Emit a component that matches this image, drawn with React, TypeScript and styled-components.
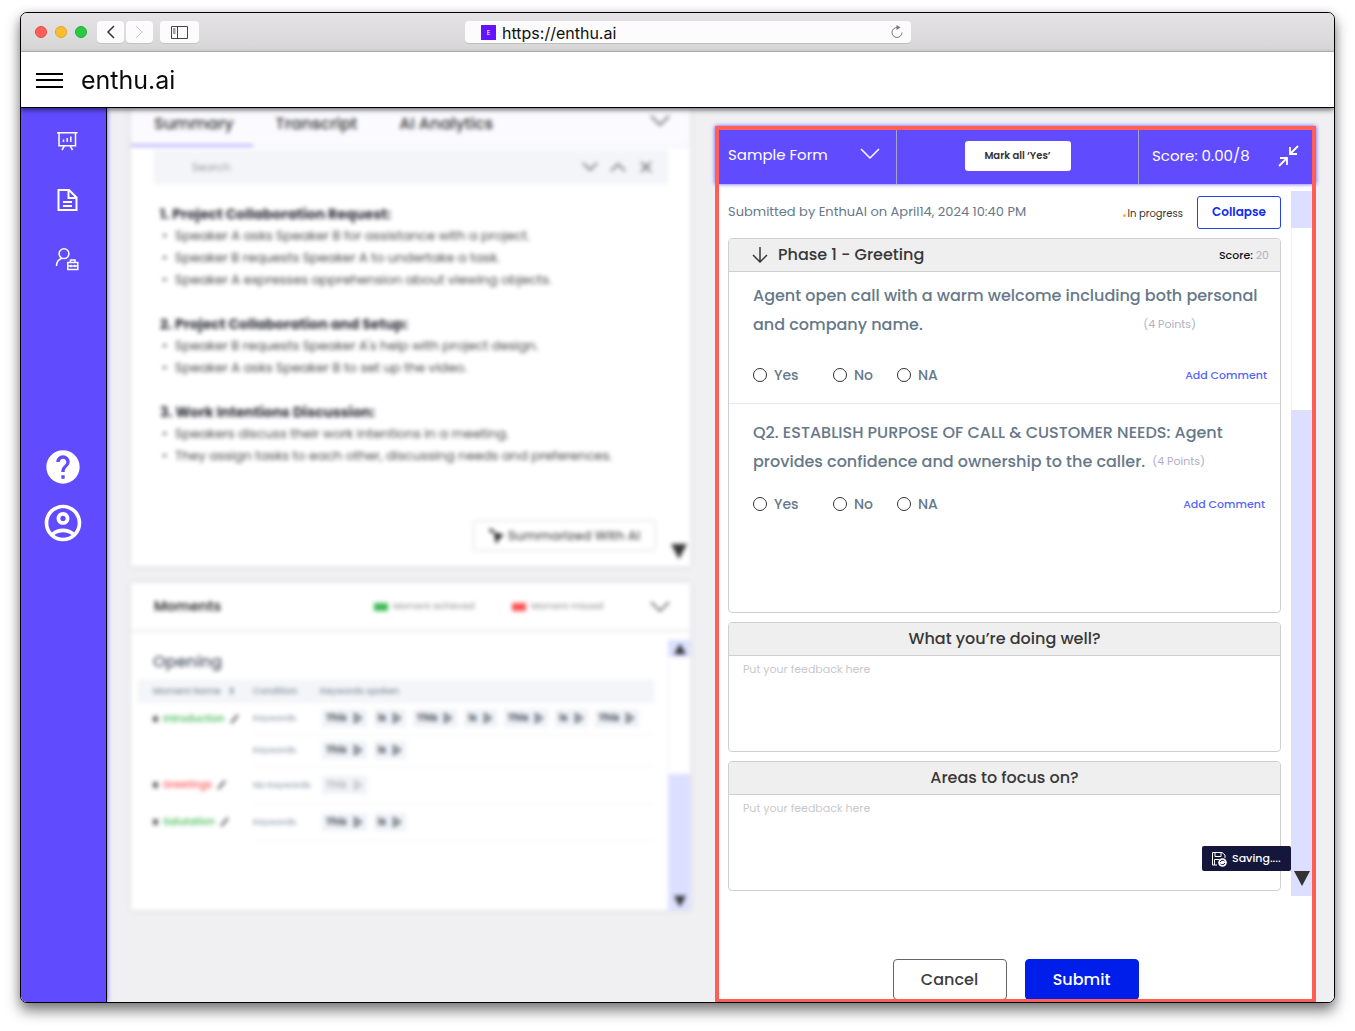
import React from "react";
import styled, { createGlobalStyle, css } from "styled-components";
import { MdHelp, MdOutlineAccountCircle } from "react-icons/md";

const violet = "#614bff";
const slate = "#667889";
const lavender = "#dcdfff";

const GlobalStyle = createGlobalStyle`
  *, *::before, *::after { box-sizing: border-box; }
  body {
    margin: 0;
    background: #fff;
    font-family: Poppins, Inter, "Liberation Sans", sans-serif;
    color: #333;
  }
  button, input, textarea { font: inherit; color: inherit; }
  button { padding: 0; border: 0; background: none; cursor: pointer; white-space: nowrap; }
  ul, h1, h2, h3, p { margin: 0; padding: 0; list-style: none; }
  svg { display: block; flex: none; }
`;

const Page = styled.div`
  padding: 12px 20px 28px;
`;

const BrowserWindow = styled.div`
  border: 1px solid #000;
  border-radius: 7px;
  overflow: hidden;
  background: #fff;
  box-shadow: 0 8px 14px rgba(0, 0, 0, 0.5), 0 0 8px rgba(0, 0, 0, 0.12);
`;

/* Browser chrome */

const Chrome = styled.div`
  display: grid;
  grid-template-columns: 444fr 446fr 423fr;
  align-items: center;
  height: 39px;
  border-bottom: 1px solid #bdbabd;
  background: linear-gradient(#e5e3e5, #d7d6d7);
`;

const ChromeLeft = styled.div`
  display: flex;
  align-items: center;
  padding-left: 14px;
`;

const Lights = styled.div`
  display: flex;
  gap: 8px;
  margin-right: 10px;
`;

const Light = styled.span<{ $fill: string; $edge: string }>`
  width: 12px;
  height: 12px;
  border-radius: 50%;
  border: 1px solid ${(p) => p.$edge};
  background: ${(p) => p.$fill};
`;

const ChromeButton = styled.button<{ $wide?: boolean }>`
  display: flex;
  align-items: center;
  justify-content: center;
  width: ${(p) => (p.$wide ? 39 : 27)}px;
  height: 22px;
  margin-right: ${(p) => (p.$wide ? 0 : 2)}px;
  margin-left: ${(p) => (p.$wide ? 5 : 0)}px;
  border-radius: 4px;
  background: #fcfcfc;
  box-shadow: 0 1px 0 rgba(0, 0, 0, 0.1);
  &:disabled { color: #c4c4c4; }
`;

const Address = styled.label`
  display: flex;
  align-items: center;
  gap: 6px;
  height: 22px;
  padding: 0 8px 0 16px;
  border-radius: 4px;
  background: #fcfcfc;
  box-shadow: 0 1px 0 rgba(0, 0, 0, 0.12);
`;

const Favicon = styled.span`
  width: 15px;
  height: 15px;
  background: #6213ff;
  color: #fff;
  font-size: 7px;
  line-height: 15px;
  text-align: center;
`;

const UrlInput = styled.input`
  flex: 1;
  min-width: 0;
  height: 22px;
  padding: 2px 0 0;
  border: 0;
  outline: 0;
  background: none;
  color: #111;
  font-family: Inter, sans-serif;
  font-size: 16px;
`;

/* App frame */

const TopBar = styled.header`
  position: relative;
  z-index: 3;
  display: flex;
  align-items: center;
  gap: 18px;
  height: 56px;
  padding: 1px 0 0 15px;
  border-bottom: 1px solid #000;
  background: #fff;
  color: #000;
  box-shadow: 0 2px 5px rgba(0, 0, 0, 0.55);
`;

const Brand = styled.span`
  font-family: Inter, sans-serif;
  font-size: 25px;
  line-height: 32px;
  color: #0b0b0b;
`;

const Shell = styled.div`
  display: flex;
  background: #f0f0f3;
`;

const Sidebar = styled.nav`
  position: relative;
  z-index: 2;
  flex: none;
  width: 86px;
  padding-top: 20px;
  border-right: 1px solid #000;
  background: ${violet};
  box-shadow: 0 0 5px ${violet};
`;

const NavGroup = styled.div<{ $secondary?: boolean }>`
  display: flex;
  flex-direction: column;
  gap: ${(p) => (p.$secondary ? 12 : 36)}px;
  padding-left: ${(p) => (p.$secondary ? 20 : 34)}px;
  margin-top: ${(p) => (p.$secondary ? 173 : 0)}px;
`;

const NavButton = styled.button<{ $size: number }>`
  display: flex;
  align-items: center;
  justify-content: center;
  width: ${(p) => p.$size}px;
  height: ${(p) => p.$size}px;
  color: #fff;
`;

const Main = styled.main`
  flex: 1;
  min-width: 0;
  display: grid;
  grid-template-columns: minmax(0, 559fr) minmax(0, 601fr);
  column-gap: 25px;
  padding: 0 18px 0 24px;
`;

/* Left column, out of focus behind the form */

const Backdrop = styled.section`
  filter: blur(2px);
`;

const Card = styled.div`
  background: #fff;
  box-shadow: 0 0 6px rgba(0, 0, 0, 0.1);
  margin-bottom: 17px;
`;

const Tabs = styled.div`
  display: flex;
  height: 39px;
  border-bottom: 1px solid #e9e9ee;
  background: #fbfbff;
`;

const Tab = styled.button<{ $active?: boolean }>`
  height: 39px;
  padding: 0 19px 6px 23px;
  border-bottom: 3px solid ${(p) => (p.$active ? "#bfb6ff" : "transparent")};
  font-size: 16px;
  font-weight: 500;
  color: #333;
`;

const TabToggle = styled.button`
  margin-left: auto;
  padding: 0 20px 12px 0;
  color: #444;
`;

const SummaryBody = styled.div`
  display: flex;
  flex-direction: column;
  height: 419px;
  padding: 3px 3px 7px 23px;
`;

const SearchBar = styled.label`
  display: flex;
  align-items: center;
  gap: 12px;
  height: 34px;
  margin-right: 19px;
  padding: 0 14px 0 36px;
  background: #f4f5f8;
  color: #555;
`;

const SearchInput = styled.input`
  flex: 1;
  min-width: 0;
  border: 0;
  background: none;
  font-size: 11px;
  &::placeholder { color: #999; }
`;

const SummaryBlock = styled.section`
  margin: 0 0 22px 6px;
  font-size: 13px;
  line-height: 22px;
  color: #444;
  ${SearchBar} + & { margin-top: 19px; }
  h3 { font-size: 14px; line-height: 22px; font-weight: 700; color: #2c2c38; }
  li { display: flex; gap: 8px; padding-left: 2px; }
  li::before { content: "•"; width: 5px; }
`;

const SummaryFoot = styled.div`
  display: flex;
  align-items: flex-end;
  justify-content: flex-end;
  gap: 15px;
  margin-top: auto;
`;

const AiButton = styled.button`
  display: flex;
  align-items: center;
  justify-content: center;
  gap: 4px;
  width: 183px;
  height: 31px;
  margin-bottom: 8px;
  border: 1px solid #dcdce0;
  border-radius: 3px;
  font-size: 13px;
  font-weight: 500;
  color: #555;
`;

const MomentsHead = styled.div`
  display: flex;
  align-items: center;
  height: 49px;
  padding: 0 20px 0 23px;
  border-bottom: 2px solid #ececef;
  color: #444;
  h2 { flex: 1; font-size: 14px; font-weight: 600; color: #333; }
`;

const Legend = styled.span<{ $color: string }>`
  display: flex;
  align-items: center;
  gap: 5px;
  width: 138px;
  font-size: 9px;
  color: #888;
  &::before { content: ""; width: 14px; height: 8px; background: ${(p) => p.$color}; }
`;

const MomentsBody = styled.div`
  display: flex;
  height: 278px;
  padding-left: 7px;
`;

const MomentsContent = styled.div`
  flex: 1;
  min-width: 0;
  padding-right: 14px;
  h3 {
    padding: 18px 0 6px 15px;
    font-size: 16px;
    line-height: 24px;
    font-weight: 500;
    color: #4d5663;
  }
`;

const Table = styled.table`
  width: 100%;
  border-collapse: collapse;
  table-layout: fixed;
  font-size: 9px;
  color: #7c8a9b;
  th { height: 23px; padding: 0; background: #f3f5f8; text-align: left; font-weight: 500; }
  th:first-child, td:first-child { width: 115px; padding-left: 15px; }
  th:nth-child(2) { width: 67px; }
  td { padding: 0; }
  td + td { border-bottom: 1px solid #f4f5f7; }
`;

const MomentRow = styled.tr<{ $height: number }>`
  height: ${(p) => p.$height}px;
`;

const MomentName = styled.span<{ $missed?: boolean }>`
  display: flex;
  align-items: center;
  gap: 5px;
  font-size: 10px;
  font-weight: 500;
  color: ${(p) => (p.$missed ? "#fb5252" : "#3fb950")};
  &::before { content: ""; width: 5px; height: 6px; background: #666; }
  svg { color: #555; }
`;

const Chips = styled.div`
  display: flex;
  gap: 7px;
  padding-left: 2px;
`;

const Chip = styled.span<{ $muted?: boolean }>`
  display: flex;
  gap: 6px;
  padding: 3px 4px;
  background: #eff2f7;
  font-size: 10px;
  line-height: 12px;
  font-weight: 600;
  color: ${(p) => (p.$muted ? "#b0b0b0" : "#333a45")};
`;

const MiniScroll = styled.div`
  display: flex;
  flex-direction: column;
  width: 22px;
  margin-top: 8px;
  color: #333;
`;

const ScrollPart = styled.div<{ $filled?: boolean; $size?: number; $inset?: number }>`
  display: flex;
  justify-content: center;
  align-items: ${(p) => (p.$inset ? "flex-end" : "center")};
  ${(p) => (p.$size ? `height: ${p.$size}px;` : "flex: 1;")}
  padding-bottom: ${(p) => p.$inset || 0}px;
  border-left: 1px solid ${(p) => (p.$filled ? lavender : "#eeefff")};
  background: ${(p) => (p.$filled ? lavender : "#fff")};
`;

/* Evaluation form */

const Panel = styled.section`
  position: relative;
  margin-top: 18px;
  background: #fff;
  &::after {
    content: "";
    position: absolute;
    inset: 0;
    border: 4px solid #ff5f57;
    border-bottom-width: 3px;
    pointer-events: none;
  }
`;

const PanelHead = styled.div`
  display: grid;
  grid-template-columns: minmax(0, 177fr) minmax(0, 242fr) minmax(0, 174fr);
  height: 58px;
  padding: 4px 4px 0;
  background: ${violet};
  box-shadow: 0 0 4px ${violet};
  color: #fff;
  font-size: 15px;
`;

const HeadCell = styled.div`
  display: flex;
  align-items: center;
  padding: 0 13px 3px;
  & + & { border-left: 1px solid #a6a3c4; }
`;

const FormPicker = styled.button`
  display: flex;
  align-items: center;
  gap: 32px;
  margin-left: -4px;
  padding-bottom: 3px;
`;

const MarkAll = styled.button`
  width: 106px;
  height: 30px;
  margin: 0 auto;
  border-radius: 3px;
  background: #fff;
  color: #333;
  font-size: 10px;
  font-weight: 600;
`;

const ShrinkButton = styled.button`
  margin-left: auto;
`;

const PanelBody = styled.div`
  display: flex;
  gap: 10px;
  padding-left: 13px;
`;

const FormColumn = styled.div`
  flex: 1;
  min-width: 0;
  display: flex;
  flex-direction: column;
  gap: 9px;
  padding-top: 11px;
`;

const Meta = styled.div`
  display: flex;
  align-items: center;
  height: 34px;
  font-size: 13px;
  color: ${slate};
`;

const Status = styled.span`
  display: flex;
  align-items: center;
  gap: 1px;
  margin: 3px 14px 0 auto;
  font-size: 10px;
  color: #333;
  &::before {
    content: "";
    width: 3px;
    height: 3px;
    margin-top: 4px;
    border-radius: 50%;
    background: #ffb82e;
  }
`;

const CollapseButton = styled.button`
  width: 84px;
  height: 33px;
  border: 1px solid #2140f0;
  border-radius: 3px;
  color: #0f2cf0;
  font-size: 12px;
  font-weight: 600;
`;

const Box = styled.section`
  border: 1px solid #cfcfd2;
  border-radius: 4px;
  background: #fff;
`;

const boxHead = css`
  height: 33px;
  border-bottom: 1px solid #cfcfd2;
  border-radius: 3px 3px 0 0;
  background: #efefef;
  color: #383838;
  font-size: 16px;
  line-height: 32px;
  font-weight: 500;
`;

const PhaseHead = styled.div`
  ${boxHead}
  display: flex;
  align-items: center;
  gap: 10px;
  padding: 0 11px 0 23px;
  h2 { flex: 1; font: inherit; }
`;

const PhaseScore = styled.span`
  font-size: 11px;
  font-weight: 500;
  color: #111;
  b { font-weight: 400; color: #b3b1c6; }
`;

const Question = styled.fieldset<{ $last?: boolean }>`
  min-width: 0;
  height: ${(p) => (p.$last ? 208 : 132)}px;
  margin: 0;
  padding: ${(p) => (p.$last ? 14 : 9)}px 7px 0 24px;
  border: 0;
  border-bottom: ${(p) => (p.$last ? 0 : 1)}px solid #e2e8f8;
`;

const QuestionText = styled.legend`
  float: left;
  width: 100%;
  padding: 0;
  font-size: 16px;
  line-height: 29px;
  font-weight: 500;
  color: ${slate};
`;

const Line = styled.span`
  display: flex;
  white-space: nowrap;
`;

const Points = styled.small<{ $apart?: boolean }>`
  margin-left: ${(p) => (p.$apart ? "auto" : "7px")};
  margin-right: ${(p) => (p.$apart ? 77 : 0)}px;
  font-size: 11px;
  font-weight: 400;
  color: #b0aec4;
`;

const Answers = styled.div<{ $near?: boolean }>`
  clear: both;
  display: flex;
  align-items: center;
  padding-top: ${(p) => (p.$near ? 18 : 26)}px;
  padding-right: ${(p) => (p.$near ? 8 : 6)}px;
  line-height: 20px;
`;

const Answer = styled.label<{ $width: number }>`
  display: flex;
  align-items: center;
  gap: 7px;
  width: ${(p) => p.$width}px;
  font-size: 14px;
  font-weight: 500;
  color: ${slate};
`;

const Radio = styled.input`
  appearance: none;
  width: 14px;
  height: 14px;
  margin: 0;
  border: 1px solid #333;
  border-radius: 50%;
  &:checked { background: ${violet}; box-shadow: inset 0 0 0 2px #fff; }
`;

const CommentLink = styled.a`
  margin-left: auto;
  color: #5566f5;
  font-size: 11px;
  font-weight: 500;
  text-decoration: none;
`;

const FeedbackTitle = styled.label`
  ${boxHead}
  display: block;
  text-align: center;
`;

const FeedbackInput = styled.textarea`
  display: block;
  width: 100%;
  height: 95px;
  padding: 5px 14px;
  border: 0;
  outline: 0;
  resize: none;
  background: none;
  font-size: 11px;
  line-height: 16px;
  &::placeholder { color: #c9c9cc; opacity: 1; }
`;

const SavingAnchor = styled.div`
  position: relative;
`;

const Saving = styled.output`
  position: absolute;
  right: -10px;
  bottom: 20px;
  display: flex;
  align-items: center;
  gap: 5px;
  width: 89px;
  height: 25px;
  padding-left: 9px;
  border-radius: 2px;
  background: #15163c;
  color: #fff;
  font-size: 11px;
  font-weight: 500;
`;

const ScrollTrack = styled.div`
  display: flex;
  flex-direction: column;
  width: 25px;
  height: 705px;
  margin-top: 7px;
  padding-right: 4px;
  color: #333;
`;

const Actions = styled.div`
  display: flex;
  justify-content: center;
  gap: 18px;
  padding: 63px 0 2px;
`;

const ActionButton = styled.button<{ $primary?: boolean }>`
  width: 114px;
  height: 41px;
  border: 1px solid ${(p) => (p.$primary ? "#001eea" : "#666")};
  border-radius: 4px;
  background: ${(p) => (p.$primary ? "#001eea" : "#fff")};
  color: ${(p) => (p.$primary ? "#fff" : "#3d3d3d")};
  font-size: 16px;
  font-weight: 500;
`;

/* Icons */

const Stroke = ({ d, w, h, width = 1 }: { d: string; w: number; h: number; width?: number }) => (
  <svg width={w} height={h} viewBox={`0 0 ${w} ${h}`} fill="none" stroke="currentColor" strokeWidth={width} aria-hidden="true">
    <path d={d} />
  </svg>
);

const ChevronDown = () => <Stroke w={20} h={12} width={1.5} d="M1 1l9 9 9-9" />;

const Triangle = ({ up, size = 16 }: { up?: boolean; size?: number }) => (
  <svg width={size} height={size} viewBox="0 0 16 16" fill="currentColor" aria-hidden="true">
    <path d={up ? "M0 15h16L8 1z" : "M0 1h16L8 16z"} />
  </svg>
);

const SidebarIcon = () => (
  <svg width="17" height="13" viewBox="0 0 17 13" fill="none" stroke="#444" aria-hidden="true">
    <path d="M.5.5h16v12H.5zM6.500.5v12M2 3h2.500M2 5h2.500M2 7h2.500" />
  </svg>
);

const ReloadIcon = () => (
  <svg width="12" height="14" viewBox="0 0 12 14" fill="none" stroke="#777" aria-hidden="true">
    <path d="M6.500 2.500A5 5 0 1 0 11 7.500" />
    <path d="M5.500 0v5l4-2.500z" fill="#777" stroke="none" />
  </svg>
);

const BoardIcon = () => (
  <svg width="24" height="24" viewBox="0 0 24 24" fill="none" stroke="currentColor" strokeWidth="1.500" aria-hidden="true">
    <path d="M2 4.700h20.500M4 4.700v13h16.500v-13M9.500 17.700L7 22M15 17.700L17.500 22" />
    <path d="M8.500 14v-2.500M12.200 14v-4M15.800 14V8.500" />
  </svg>
);

const DocIcon = () => (
  <svg width="24" height="24" viewBox="0 0 24 24" fill="none" stroke="currentColor" strokeWidth="2" aria-hidden="true">
    <path d="M3.500 2h10.500L21.500 9.500V22h-18z" />
    <path d="M13.500 2v8h8" />
    <path d="M8 14h9M8 18h9" />
  </svg>
);

const AgentIcon = () => (
  <svg width="24" height="24" viewBox="0 0 24 24" fill="none" stroke="currentColor" strokeWidth="1.500" aria-hidden="true">
    <circle cx="9" cy="5.700" r="4.900" />
    <path d="M1.500 18c0-4 2-6.500 5-7.500" />
    <path d="M12.800 14.500h10v7h-10zM15.500 14.500V12h4.500v2.500M12.800 18h10M16 16.800v2.400M19.700 16.800v2.400" />
  </svg>
);

const ShrinkIcon = () => (
  <Stroke w={21} h={22} width={1.8} d="M20 1l-7 7M12 2v7h7M1 21l7-7M9 20v-7H2" />
);

const SaveIcon = () => (
  <svg width="16" height="16" viewBox="0 0 16 16" fill="none" stroke="currentColor" aria-hidden="true">
    <path d="M6 14H1.500V1.500h9.500L14 4v3M4 1.500v4h6v-4M3.500 14V8.500h5" />
    <circle cx="11.500" cy="11.500" r="4.300" fill="currentColor" stroke="none" />
    <path d="M9.200 11a2.500 2.500 0 0 1 4.300-.8M13.800 12a2.500 2.500 0 0 1-4.300.8" stroke="#15163c" />
  </svg>
);

const CursorIcon = () => (
  <svg width="15" height="16" viewBox="0 0 15 16" fill="#222" aria-hidden="true">
    <path d="M5 4l10 3-4 3-4 6zM0 1l4 0 1 4-4-1z" />
  </svg>
);

const PencilIcon = () => <Stroke w={9} h={10} width={2} d="M1 9l7-8" />;

/* Data */

const summary = [
  {
    title: "1. Project Collaboration Request:",
    points: [
      "Speaker A asks Speaker B for assistance with a project.",
      "Speaker B requests Speaker A to undertake a task.",
      "Speaker A expresses apprehension about viewing objects.",
    ],
  },
  {
    title: "2. Project Collaboration and Setup:",
    points: [
      "Speaker B requests Speaker A's help with project design.",
      "Speaker A asks Speaker B to set up the video.",
    ],
  },
  {
    title: "3. Work Intentions Discussion:",
    points: [
      "Speakers discuss their work intentions in a meeting.",
      "They assign tasks to each other, discussing needs and preferences.",
    ],
  },
];

const moments = [
  { name: "Introduction", condition: "Keywords", words: ["This", "is", "This", "is", "This", "is", "This"], height: 31 },
  { name: "", condition: "Keywords", words: ["This", "is"], height: 32 },
  { name: "Greetings", condition: "No Keywords", words: ["This"], missed: true, height: 38 },
  { name: "Salutation", condition: "Keywords", words: ["This", "is"], height: 36 },
];

const answers = [
  { label: "Yes", width: 80 },
  { label: "No", width: 64 },
  { label: "NA", width: 60 },
];

const AnswerRow = ({ name, near }: { name: string; near?: boolean }) => (
  <Answers $near={near}>
    {answers.map((a) => (
      <Answer key={a.label} $width={a.width}>
        <Radio type="radio" name={name} value={a.label} />
        {a.label}
      </Answer>
    ))}
    <CommentLink href="#comment">Add Comment</CommentLink>
  </Answers>
);

const Feedback = ({ id, title }: { id: string; title: string }) => (
  <Box>
    <FeedbackTitle htmlFor={id}>{title}</FeedbackTitle>
    <FeedbackInput id={id} placeholder="Put your feedback here" />
  </Box>
);

const SummaryCard = () => (
  <Card>
    <Tabs>
      <Tab $active>Summary</Tab>
      <Tab>Transcript</Tab>
      <Tab>AI Analytics</Tab>
      <TabToggle aria-label="Collapse summary"><ChevronDown /></TabToggle>
    </Tabs>
    <SummaryBody>
      <SearchBar>
        <SearchInput placeholder="Search" aria-label="Search" />
        <Stroke w={16} h={10} width={1.5} d="M1 1l7 7 7-7" />
        <Stroke w={16} h={10} width={1.5} d="M1 9l7-7 7 7" />
        <Stroke w={16} h={12} width={1.5} d="M3 1l10 10M13 1L3 11" />
      </SearchBar>
      {summary.map((s) => (
        <SummaryBlock key={s.title}>
          <h3>{s.title}</h3>
          <ul>
            {s.points.map((p) => (
              <li key={p}>{p}</li>
            ))}
          </ul>
        </SummaryBlock>
      ))}
      <SummaryFoot>
        <AiButton><CursorIcon />Summarized With AI</AiButton>
        <Triangle />
      </SummaryFoot>
    </SummaryBody>
  </Card>
);

const MomentsCard = () => (
  <Card>
    <MomentsHead>
      <h2>Moments</h2>
      <Legend $color="#3dbb55">Moment achieved</Legend>
      <Legend $color="#fb4f4f">Moment missed</Legend>
      <ChevronDown />
    </MomentsHead>
    <MomentsBody>
      <MomentsContent>
        <h3>Opening</h3>
        <Table>
          <thead>
            <tr>
              <th>Moment Name &nbsp; ⬍</th>
              <th>Condition</th>
              <th>Keywords spoken</th>
            </tr>
          </thead>
          <tbody>
            {moments.map((m, i) => (
              <MomentRow key={i} $height={m.height}>
                <td>{m.name && <MomentName $missed={m.missed}>{m.name}<PencilIcon /></MomentName>}</td>
                <td>{m.condition}</td>
                <td>
                  <Chips>
                    {m.words.map((w, j) => (
                      <Chip key={j} $muted={m.missed}>
                        {w}
                        <Stroke w={10} h={12} width={1.5} d="M2 2l6 4-6 4z" />
                      </Chip>
                    ))}
                  </Chips>
                </td>
              </MomentRow>
            ))}
          </tbody>
        </Table>
      </MomentsContent>
      <MiniScroll>
        <ScrollPart $filled $size={17}><Triangle up size={12} /></ScrollPart>
        <ScrollPart />
        <ScrollPart $filled $size={136} $inset={3}><Triangle size={12} /></ScrollPart>
      </MiniScroll>
    </MomentsBody>
  </Card>
);

const EvaluationPanel = () => (
  <Panel>
    <PanelHead>
      <HeadCell>
        <FormPicker>Sample Form<ChevronDown /></FormPicker>
      </HeadCell>
      <HeadCell>
        <MarkAll>Mark all ‘Yes’</MarkAll>
      </HeadCell>
      <HeadCell>
        Score: 0.00/8
        <ShrinkButton aria-label="Shrink form"><ShrinkIcon /></ShrinkButton>
      </HeadCell>
    </PanelHead>
    <PanelBody>
      <FormColumn>
        <Meta>
          Submitted by EnthuAI on April14, 2024 10:40 PM
          <Status>In progress</Status>
          <CollapseButton>Collapse</CollapseButton>
        </Meta>
        <Box>
          <PhaseHead>
            <Stroke w={16} h={16} width={1.5} d="M8 0v15M1 8l7 7 7-7" />
            <h2>Phase 1 - Greeting</h2>
            <PhaseScore>Score: <b>20</b></PhaseScore>
          </PhaseHead>
          <Question>
            <QuestionText>
              <Line>Agent open call with a warm welcome including both personal</Line>
              <Line>and company name. <Points $apart>(4 Points)</Points></Line>
            </QuestionText>
            <AnswerRow name="greeting" />
          </Question>
          <Question $last>
            <QuestionText>
              <Line>Q2. ESTABLISH PURPOSE OF CALL &amp; CUSTOMER NEEDS: Agent</Line>
              <Line>provides confidence and ownership to the caller. <Points>(4 Points)</Points></Line>
            </QuestionText>
            <AnswerRow name="purpose" near />
          </Question>
        </Box>
        <Feedback id="doing-well" title="What you’re doing well?" />
        <SavingAnchor>
          <Feedback id="focus-areas" title="Areas to focus on?" />
          <Saving><SaveIcon />Saving....</Saving>
        </SavingAnchor>
      </FormColumn>
      <ScrollTrack>
        <ScrollPart $filled $size={37} />
        <ScrollPart />
        <ScrollPart $filled $size={486} $inset={10}><Triangle /></ScrollPart>
      </ScrollTrack>
    </PanelBody>
    <Actions>
      <ActionButton>Cancel</ActionButton>
      <ActionButton $primary>Submit</ActionButton>
    </Actions>
  </Panel>
);

export default function App() {
  return (
    <Page>
      <GlobalStyle />
      <BrowserWindow>
        <Chrome>
          <ChromeLeft>
            <Lights>
              <Light $fill="#ff5f57" $edge="#e24b41" />
              <Light $fill="#ffbd2e" $edge="#e1a325" />
              <Light $fill="#28ca41" $edge="#1eae31" />
            </Lights>
            <ChromeButton aria-label="Back"><Stroke w={9} h={14} width={1.5} d="M8 1L2 7l6 6" /></ChromeButton>
            <ChromeButton aria-label="Forward" disabled><Stroke w={9} h={14} d="M1 1l6 6-6 6" /></ChromeButton>
            <ChromeButton $wide aria-label="Show sidebar"><SidebarIcon /></ChromeButton>
          </ChromeLeft>
          <Address>
            <Favicon>E</Favicon>
            <UrlInput defaultValue="https://enthu.ai" aria-label="Address" />
            <ReloadIcon />
          </Address>
        </Chrome>
        <TopBar>
          <button aria-label="Menu"><Stroke w={27} h={16} width={2} d="M0 2h27M0 8h27M0 15h27" /></button>
          <Brand>enthu.ai</Brand>
        </TopBar>
        <Shell>
          <Sidebar>
            <NavGroup>
              <NavButton $size={24} aria-label="Dashboard"><BoardIcon /></NavButton>
              <NavButton $size={24} aria-label="Reports"><DocIcon /></NavButton>
              <NavButton $size={24} aria-label="Agents"><AgentIcon /></NavButton>
            </NavGroup>
            <NavGroup $secondary>
              <NavButton $size={44} aria-label="Help"><MdHelp size={40} /></NavButton>
              <NavButton $size={44} aria-label="Account"><MdOutlineAccountCircle size={44} /></NavButton>
            </NavGroup>
          </Sidebar>
          <Main>
            <Backdrop>
              <SummaryCard />
              <MomentsCard />
            </Backdrop>
            <EvaluationPanel />
          </Main>
        </Shell>
      </BrowserWindow>
    </Page>
  );
}
